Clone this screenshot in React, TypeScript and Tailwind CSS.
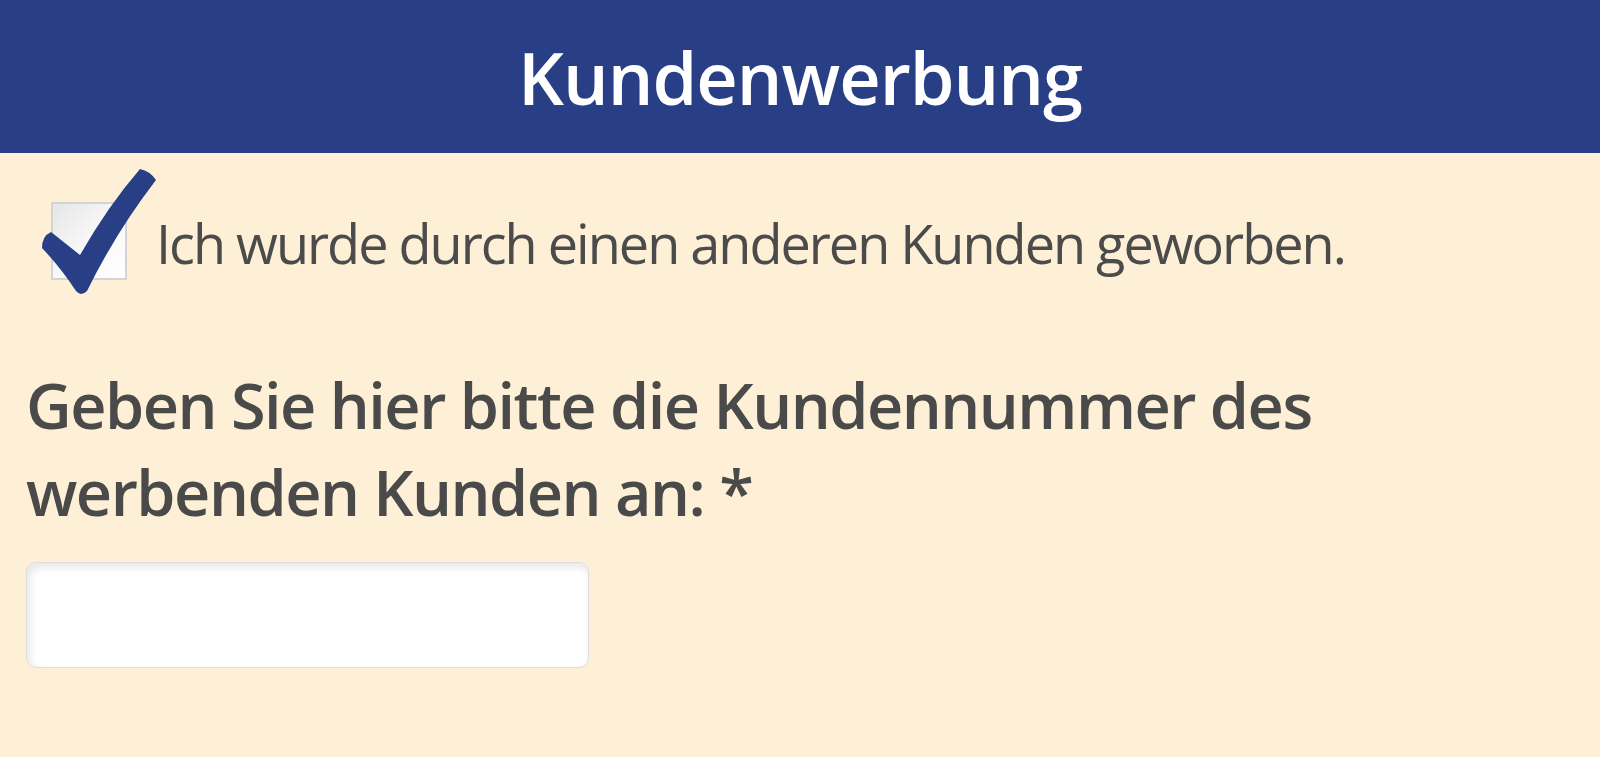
import React from "react";

export default function App() {
  return (
    <div
      className="w-[1600px] h-[757px] bg-[#fdf0d6] overflow-hidden"
      style={{ fontFamily: '"Open Sans", "Noto Sans", sans-serif' }}
    >
      <header className="h-[153px] bg-[#283f86] flex items-center justify-center">
        <h1 className="text-[72px] font-semibold text-white leading-none tracking-[-1px]">
          Kundenwerbung
        </h1>
      </header>
      <main className="pl-[26px] pr-[26px]">
        <label className="relative flex items-start mt-[49px]">
          <span className="ml-[25px] w-[76px] h-[78px] border-2 border-[#d4d4d4] bg-gradient-to-br from-[#e6e6e6] via-[#f8f8f8] to-white shrink-0" />
          <svg
            className="absolute left-[10px] top-[-37px]"
            width="124"
            height="134"
            viewBox="36 165 124 134"
          >
            <path
              d="M42 248 Q42 236 51 232 L80 255 Q108 206 140 169 Q150 171 156 180 Q116 232 87 291 Q81 297 76 291 Q61 268 42 248 Z"
              fill="#283f86"
            />
          </svg>
          <span className="ml-[29px] mt-[2px] text-[54px] leading-[78px] text-[#4b4b4b] font-normal tracking-[-2px]">
            Ich wurde durch einen anderen Kunden geworben.
          </span>
        </label>
        <p className="mt-[79px] text-[63px] leading-[87px] font-semibold text-[#4a4a4a] tracking-[-1.5px]">
          Geben Sie hier bitte die Kundennummer des werbenden Kunden an: *
        </p>
        <input
          type="text"
          className="mt-[27px] block w-[563px] h-[106px] bg-white border border-[#dcdcdc] rounded-[10px] shadow-[inset_3px_4px_8px_rgba(0,0,0,0.10)] outline-none"
        />
      </main>
    </div>
  );
}
